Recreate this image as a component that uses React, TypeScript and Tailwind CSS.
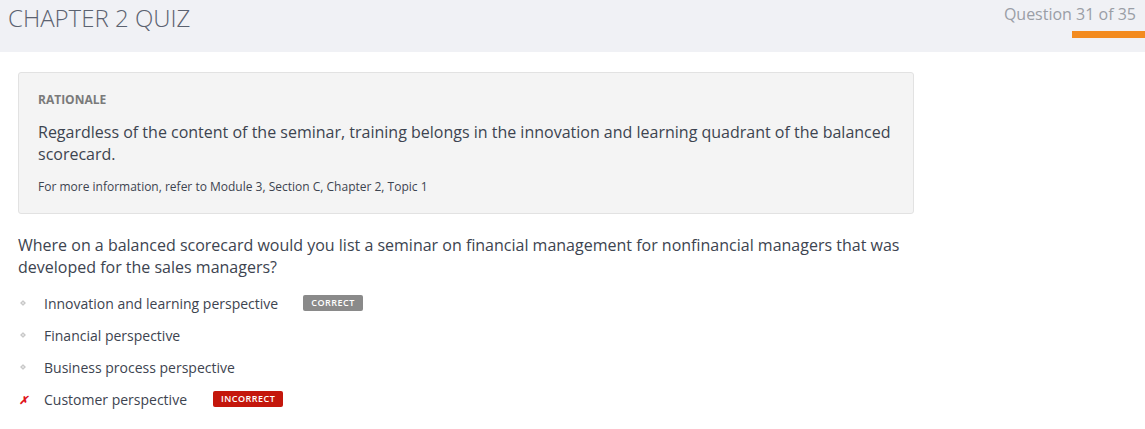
import React from 'react';

const options = [
  { text: 'Innovation and learning perspective', badge: 'correct' },
  { text: 'Financial perspective' },
  { text: 'Business process perspective' },
  { text: 'Customer perspective', badge: 'incorrect', picked: true },
];

const App = () => {
  return (
    <div className="min-h-screen bg-white" style={{ fontFamily: '"Open Sans", sans-serif' }}>
      <div className="flex h-[52px] justify-between bg-[#f0f1f5]">
        <h1 className="pl-2 text-[24px] leading-[36px] font-light text-[#5b6270]">CHAPTER 2 QUIZ</h1>
        <div className="flex flex-col items-end">
          <div className="mt-[2px] pr-[9px] text-[16px] leading-[24px] text-[#9a9ea6]">Question 31 of 35</div>
          <div className="mt-[5px] h-[7px] w-[73px] bg-[#f38b1f]" />
        </div>
      </div>

      <div className="ml-[18px] w-[896px] pt-5">
        <div className="rounded-[3px] border border-[#e2e2e2] bg-[#f4f4f4] px-[19px] pt-[18px] pb-[17px]">
          <div className="text-[12px] leading-[18px] font-bold text-[#7a7a7a]">RATIONALE</div>
          <p className="mt-3 text-[16px] leading-[22px] text-[#3d4450]">
            Regardless of the content of the seminar, training belongs in the innovation and learning quadrant of the balanced scorecard.
          </p>
          <p className="mt-[13px] text-[12px] leading-[18px] text-[#3d4450]">
            For more information, refer to Module 3, Section C, Chapter 2, Topic 1
          </p>
        </div>

        <p className="mt-5 pr-2 text-[16px] leading-[22px] text-[#3d4450]">
          Where on a balanced scorecard would you list a seminar on financial management for nonfinancial managers that was developed for the sales managers?
        </p>

        <ul className="mt-[9px] flex flex-col">
          {options.map((o) => (
            <li key={o.text} className="flex h-8 items-center">
              <span className="mr-4 flex w-[10px] justify-center">
                {o.picked ? (
                  <span className="text-[11px] font-bold italic leading-none text-[#e0141a]">✗</span>
                ) : (
                  <span className="block h-[4px] w-[4px] rotate-45 border border-[#c4c4c4] bg-[#e4e4e4]" />
                )}
              </span>
              <span className="text-[14px] text-[#3d4450]">{o.text}</span>
              {o.badge === 'correct' && (
                <span className="ml-[25px] rounded-[2px] bg-[#8a8a8a] px-[8px] text-[9px] leading-[16px] font-semibold tracking-[0.5px] text-white">
                  CORRECT
                </span>
              )}
              {o.badge === 'incorrect' && (
                <span className="ml-[26px] rounded-[2px] bg-[#c4170c] px-[8px] text-[9px] leading-[16px] font-semibold tracking-[0.5px] text-white">
                  INCORRECT
                </span>
              )}
            </li>
          ))}
        </ul>
      </div>
    </div>
  );
};

export default App;
